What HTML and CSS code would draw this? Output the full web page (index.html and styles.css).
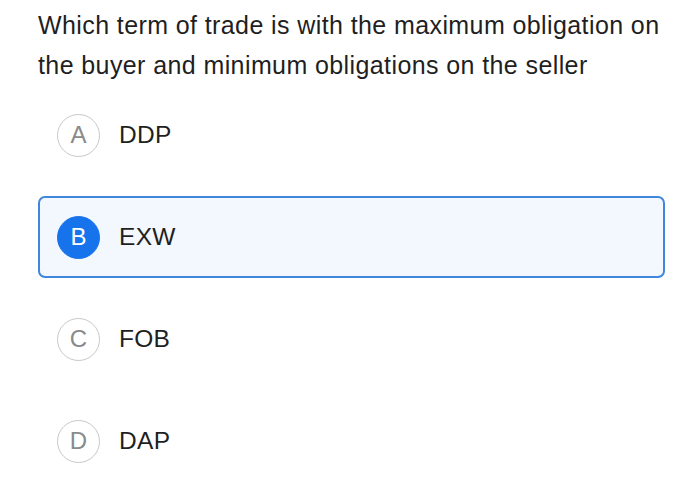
FILE: index.html
```html
<!DOCTYPE html>
<html>
<head>
<meta charset="utf-8">
<link rel="stylesheet" href="styles.css">
</head>
<body>
<div class="page">
  <p class="question">Which term of trade is with the maximum obligation on the buyer and minimum obligations on the seller</p>
  <ul class="options">
    <li class="option"><span class="badge">A</span><span class="label">DDP</span></li>
    <li class="option selected"><span class="badge">B</span><span class="label">EXW</span></li>
    <li class="option"><span class="badge">C</span><span class="label">FOB</span></li>
    <li class="option"><span class="badge">D</span><span class="label">DAP</span></li>
  </ul>
</div>
</body>
</html>
```
FILE: styles.css
```css
html, body {
  margin: 0;
  padding: 0;
  background: #ffffff;
}
.page {
  padding: 5px 35px 0 38px;
  font-family: "Liberation Sans", "Noto Sans", sans-serif;
  color: #1f1f1f;
}
.question {
  margin: 0;
  font-size: 25px;
  letter-spacing: 0.4px;
  line-height: 40px;
  width: 625px;
}
.options {
  list-style: none;
  margin: 9px 0 0 0;
  padding: 0;
  display: flex;
  flex-direction: column;
  gap: 20px;
}
.option {
  box-sizing: border-box;
  height: 82px;
  border: 2px solid transparent;
  border-radius: 7px;
  display: flex;
  align-items: center;
  padding-left: 17px;
  gap: 19px;
}
.option.selected {
  border-color: #3f87dc;
  background: #f3f7fe;
}
.badge {
  box-sizing: border-box;
  width: 43px;
  height: 43px;
  border-radius: 50%;
  border: 1.5px solid #c8c8c8;
  color: #8a8a8a;
  display: flex;
  align-items: center;
  justify-content: center;
  font-size: 24px;
  line-height: 1;
}
.selected .badge {
  background: #1673ec;
  border-color: #1673ec;
  color: #ffffff;
}
.label {
  font-size: 24.5px;
  letter-spacing: 0.3px;
  color: #1f1f1f;
}
```
